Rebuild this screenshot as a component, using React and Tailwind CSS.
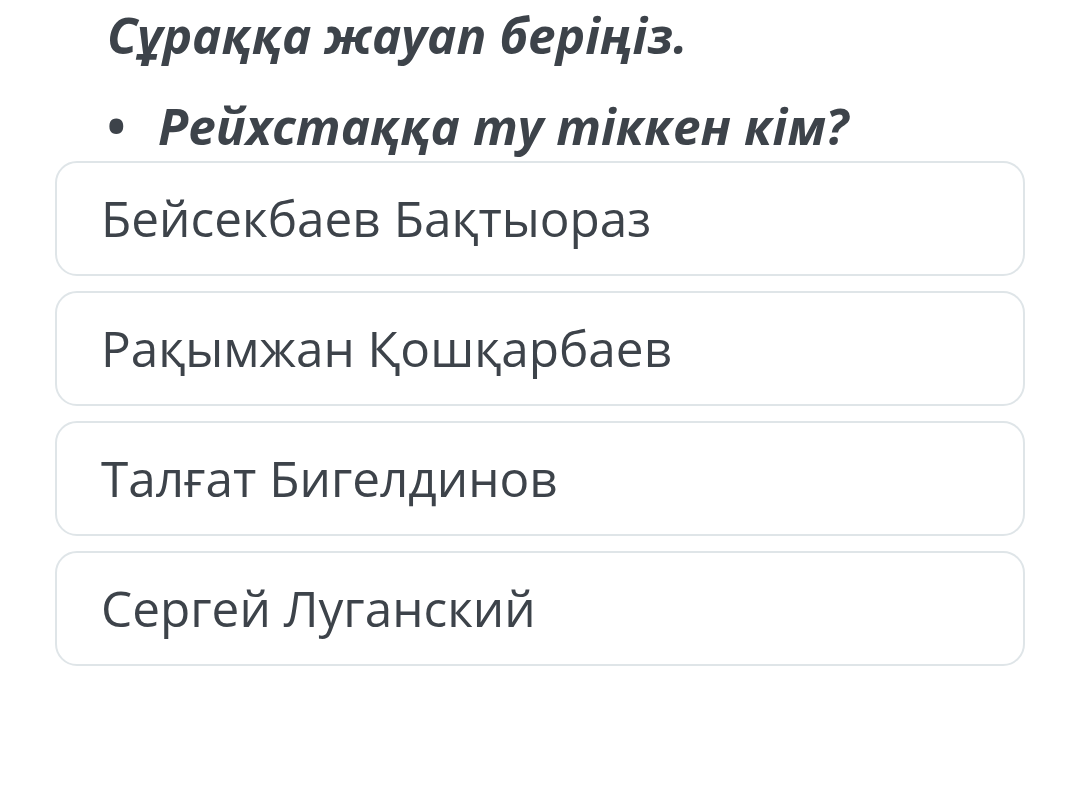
import React from 'react';

const options = [
  'Бейсекбаев Бақтыораз',
  'Рақымжан Қошқарбаев',
  'Талғат Бигелдинов',
  'Сергей Луганский',
];

export default function App() {
  return (
    <div
      className="w-[1080px] h-[794px] bg-white text-[#3d434a] overflow-hidden"
      style={{ fontFamily: '"Open Sans", "Noto Sans", sans-serif' }}
    >
      {/* Тапсырма */}
      <div className="pl-[107px] pt-[4px]">
        <h2 className="text-[49.5px] leading-[62px] font-bold italic">Сұраққа жауап беріңіз.</h2>
        <div className="flex items-baseline mt-[33px] h-[54px]">
          <span className="w-[51px] text-[49.5px] leading-[54px] font-bold">•</span>
          <span className="text-[49.5px] leading-[54px] font-bold italic">Рейхстаққа ту тіккен кім?</span>
        </div>
      </div>

      {/* Жауап нұсқалары */}
      <div className="flex flex-col gap-[15px] px-[55px] mt-[8px] w-[1080px]">
        {options.map((o) => (
          <div
            key={o}
            className="w-[970px] h-[115px] flex items-center pl-[44px] border-2 border-[#dfe5e8] rounded-[22px]"
          >
            <span className="text-[49.5px] leading-none">{o}</span>
          </div>
        ))}
      </div>
    </div>
  );
}
